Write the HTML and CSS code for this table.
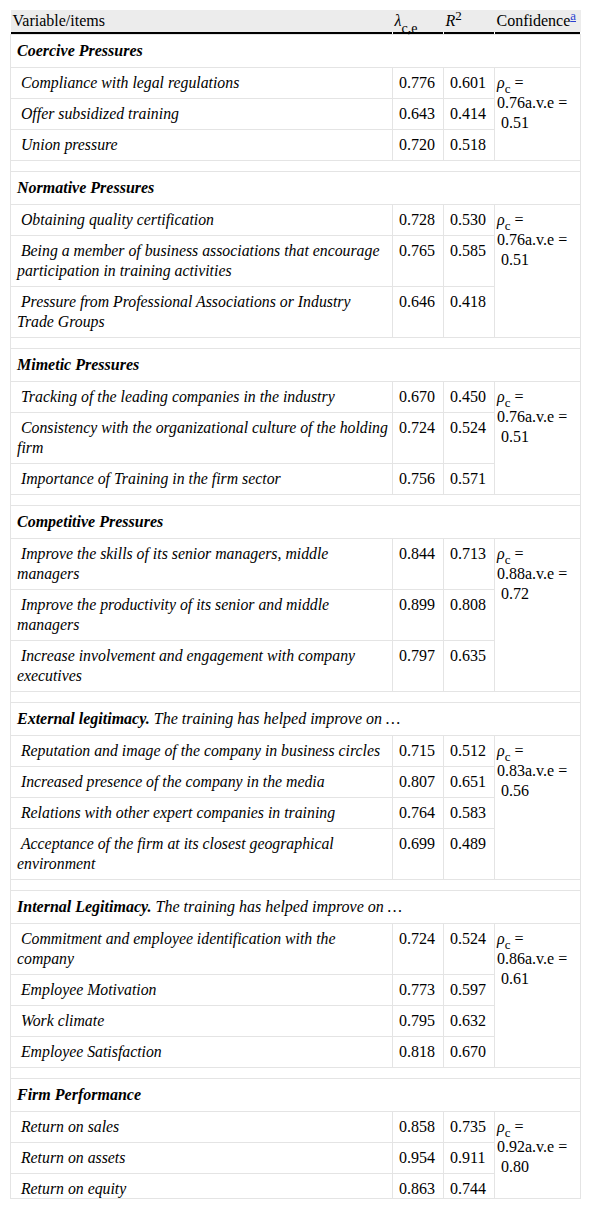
FILE: index.html
```html
<!DOCTYPE html>
<html lang="en">
<head>
<meta charset="utf-8">
<title>Table</title>
<link rel="stylesheet" href="styles.css">
</head>
<body>
<div class="page">
<div class="clip">
<table class="tbl">
  <colgroup>
    <col class="c-var">
    <col class="c-num">
    <col class="c-num">
    <col class="c-conf">
  </colgroup>
  <thead>
    <tr>
      <th>Variable/items</th>
      <th><i>λ</i><sub class="lsub">c,e</sub></th>
      <th><i>R</i><sup>2</sup></th>
      <th>Confidence<sup><a class="fn" href="#a">a</a></sup></th>
    </tr>
  </thead>
  <tbody>
    <tr class="sec"><td colspan="4"><b><i>Coercive Pressures</i></b></td></tr>
    <tr><td class="item"><i>&nbsp;Compliance with legal regulations</i></td><td class="num">0.776</td><td class="num">0.601</td><td class="conf" rowspan="3"><i>ρ</i><sub>c</sub>&nbsp;=<br>0.76a.v.e =<br>&nbsp;0.51</td></tr>
    <tr><td class="item"><i>&nbsp;Offer subsidized training</i></td><td class="num">0.643</td><td class="num">0.414</td></tr>
    <tr><td class="item"><i>&nbsp;Union pressure</i></td><td class="num">0.720</td><td class="num">0.518</td></tr>
    <tr class="gap"><td colspan="4"></td></tr>

    <tr class="sec"><td colspan="4"><b><i>Normative Pressures</i></b></td></tr>
    <tr><td class="item"><i>&nbsp;Obtaining quality certification</i></td><td class="num">0.728</td><td class="num">0.530</td><td class="conf" rowspan="3"><i>ρ</i><sub>c</sub>&nbsp;=<br>0.76a.v.e =<br>&nbsp;0.51</td></tr>
    <tr><td class="item"><i>&nbsp;Being a member of business associations that encourage participation in training activities</i></td><td class="num">0.765</td><td class="num">0.585</td></tr>
    <tr><td class="item"><i>&nbsp;Pressure from Professional Associations or Industry Trade Groups</i></td><td class="num">0.646</td><td class="num">0.418</td></tr>
    <tr class="gap"><td colspan="4"></td></tr>

    <tr class="sec"><td colspan="4"><b><i>Mimetic Pressures</i></b></td></tr>
    <tr><td class="item"><i>&nbsp;Tracking of the leading companies in the industry</i></td><td class="num">0.670</td><td class="num">0.450</td><td class="conf" rowspan="3"><i>ρ</i><sub>c</sub>&nbsp;=<br>0.76a.v.e =<br>&nbsp;0.51</td></tr>
    <tr><td class="item"><i>&nbsp;Consistency with the organizational culture of the holding firm</i></td><td class="num">0.724</td><td class="num">0.524</td></tr>
    <tr><td class="item"><i>&nbsp;Importance of Training in the firm sector</i></td><td class="num">0.756</td><td class="num">0.571</td></tr>
    <tr class="gap"><td colspan="4"></td></tr>

    <tr class="sec"><td colspan="4"><b><i>Competitive Pressures</i></b></td></tr>
    <tr><td class="item"><i>&nbsp;Improve the skills of its senior managers, middle managers</i></td><td class="num">0.844</td><td class="num">0.713</td><td class="conf" rowspan="3"><i>ρ</i><sub>c</sub>&nbsp;=<br>0.88a.v.e =<br>&nbsp;0.72</td></tr>
    <tr><td class="item"><i>&nbsp;Improve the productivity of its senior and middle managers</i></td><td class="num">0.899</td><td class="num">0.808</td></tr>
    <tr><td class="item"><i>&nbsp;Increase involvement and engagement with company executives</i></td><td class="num">0.797</td><td class="num">0.635</td></tr>
    <tr class="gap"><td colspan="4"></td></tr>

    <tr class="sec"><td colspan="4"><b><i>External legitimacy.</i></b><i> The training has helped improve on …</i></td></tr>
    <tr><td class="item"><i>&nbsp;Reputation and image of the company in business circles</i></td><td class="num">0.715</td><td class="num">0.512</td><td class="conf" rowspan="4"><i>ρ</i><sub>c</sub>&nbsp;=<br>0.83a.v.e =<br>&nbsp;0.56</td></tr>
    <tr><td class="item"><i>&nbsp;Increased presence of the company in the media</i></td><td class="num">0.807</td><td class="num">0.651</td></tr>
    <tr><td class="item"><i>&nbsp;Relations with other expert companies in training</i></td><td class="num">0.764</td><td class="num">0.583</td></tr>
    <tr><td class="item"><i>&nbsp;Acceptance of the firm at its closest geographical environment</i></td><td class="num">0.699</td><td class="num">0.489</td></tr>
    <tr class="gap"><td colspan="4"></td></tr>

    <tr class="sec"><td colspan="4"><b><i>Internal Legitimacy.</i></b><i> The training has helped improve on …</i></td></tr>
    <tr><td class="item"><i>&nbsp;Commitment and employee identification with the company</i></td><td class="num">0.724</td><td class="num">0.524</td><td class="conf" rowspan="4"><i>ρ</i><sub>c</sub>&nbsp;=<br>0.86a.v.e =<br>&nbsp;0.61</td></tr>
    <tr><td class="item"><i>&nbsp;Employee Motivation</i></td><td class="num">0.773</td><td class="num">0.597</td></tr>
    <tr><td class="item"><i>&nbsp;Work climate</i></td><td class="num">0.795</td><td class="num">0.632</td></tr>
    <tr><td class="item"><i>&nbsp;Employee Satisfaction</i></td><td class="num">0.818</td><td class="num">0.670</td></tr>
    <tr class="gap"><td colspan="4"></td></tr>

    <tr class="sec"><td colspan="4"><b><i>Firm Performance</i></b></td></tr>
    <tr><td class="item"><i>&nbsp;Return on sales</i></td><td class="num">0.858</td><td class="num">0.735</td><td class="conf" rowspan="3"><i>ρ</i><sub>c</sub>&nbsp;=<br>0.92a.v.e =<br>&nbsp;0.80</td></tr>
    <tr><td class="item"><i>&nbsp;Return on assets</i></td><td class="num">0.954</td><td class="num">0.911</td></tr>
    <tr><td class="item"><i>&nbsp;Return on equity</i></td><td class="num">0.863</td><td class="num">0.744</td></tr>
  </tbody>
</table>
</div>
</div>
</body>
</html>
```

FILE: styles.css
```css
html, body {
  margin: 0;
  padding: 0;
  background: #fff;
}

.page {
  padding: 0 10px 10px;
  color: #000;
}

.clip {
  width: 571px;
  height: 1188px;
  padding-top: 10px;
  overflow: hidden;
  border-bottom: 1px solid #e4e4e4;
}

.tbl, .tbl th, .tbl td, .tbl i, .tbl b {
  font-family: "Liberation Serif", "DejaVu Serif", serif;
}

.tbl {
  width: 570px;
  table-layout: fixed;
  border-collapse: collapse;
  font-size: 16px;
  line-height: 20px;
}

.c-var { width: 382px; }
.c-num { width: 51px; }
.c-conf { width: 86px; }

.tbl th {
  text-align: left;
  font-weight: normal;
  padding: 1px 2px 3px;
  vertical-align: top;
  background:
    linear-gradient(#000, #000) left bottom / calc(100% - 1px) 2px no-repeat,
    linear-gradient(#fff, #fff) left bottom / 100% 2px no-repeat,
    #ececec;
}

.tbl td {
  border: 1px solid #e4e4e4;
  vertical-align: top;
  padding: 5px 6px;
}

.tbl td.item {
  font-size: 15.8px;
  padding-right: 2px;
}

.tbl sub, .tbl sup {
  line-height: 0;
  font-size: 13px;
}

.tbl sub {
  position: relative;
  top: 1px;
}

.tbl sub.lsub {
  top: 3px;
  font-size: 14px;
}

.fn {
  color: #2a3fd0;
  text-decoration: underline;
}

.sec td {
  font-size: 16px;
  line-height: 22px;
}

.sec td i {
  font-size: 16px;
}

.tbl td.conf {
  padding: 5px 2px;
}

.gap td {
  height: 10px;
  padding: 0;
}
```
